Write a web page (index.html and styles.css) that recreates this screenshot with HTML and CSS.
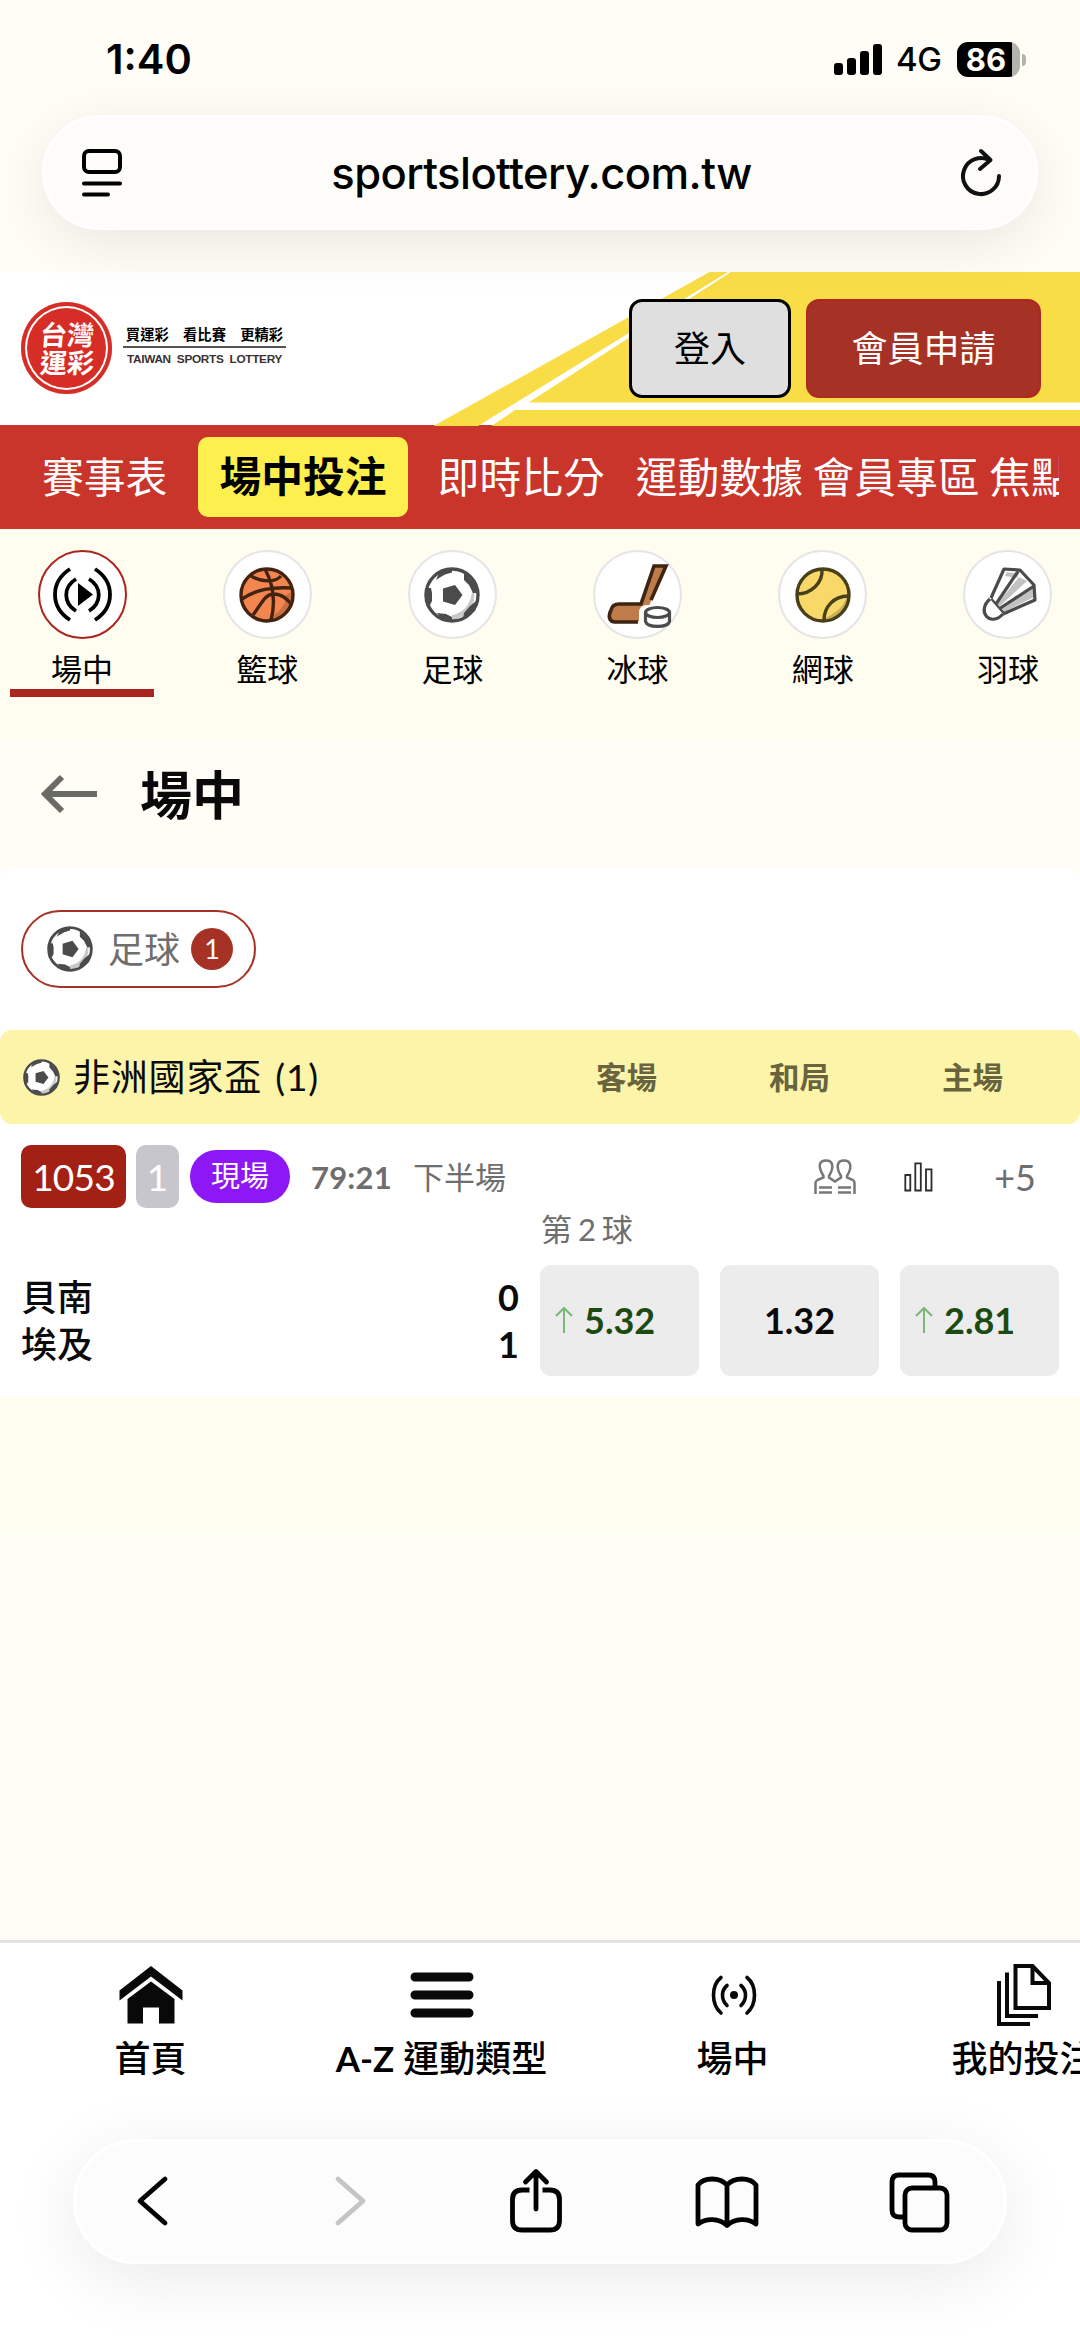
FILE: index.html
```html
<!DOCTYPE html>
<html lang="zh-Hant">
<head>
<meta charset="utf-8">
<title>台灣運彩</title>
<link rel="stylesheet" href="styles.css">
</head>
<body>
<svg width="0" height="0" class="defs">
  <symbol id="soccer" viewBox="0 0 56 56">
    <circle cx="28" cy="28" r="26" fill="#fff"/>
    <path d="M50 23a25 25 0 0 1-22 30v-5q17-3 20-23z" fill="#c9c9c9"/>
    <circle cx="28" cy="28" r="26" fill="none" stroke="#4b4b4b" stroke-width="3.4"/>
    <path d="M19 21.500L31 18l7.500 10L31 38l-12-3.500z" fill="#4b4b4b"/>
    <path d="M12 13l3-7 13-4.500v4l-7 2-6 3.500zM1.500 21H7l1 5v8l-2 4H2zM13 46l9 1 6 3v4l-10-1zM40 5l11 12 2 9h-4l-4-8-5-5zM51 35l3-3-3 12-12 9 1-7 6-7z" fill="#4b4b4b"/>
  </symbol>
</svg>
<div class="screen">
  <div class="status">
    <span class="time">1:40</span>
    <div class="status-right">
      <svg width="48" height="31" viewBox="0 0 48 31"><rect y="19" width="9" height="12" rx="3"/><rect x="13" y="14" width="9" height="17" rx="3"/><rect x="26" y="7" width="9" height="24" rx="3"/><rect x="39" width="9" height="31" rx="3"/></svg>
      <span class="net">4G</span>
      <span class="battery">86</span>
    </div>
  </div>
  <div class="address">
    <svg width="40" height="48" viewBox="0 0 40 48" fill="none" stroke="#000" stroke-width="4" stroke-linecap="round"><rect x="2" y="2" width="36" height="21" rx="5"/><path d="M2 34.500h36M2 45.500h24"/></svg>
    <span class="url">sportslottery.com.tw</span>
    <svg width="40" height="48" viewBox="0 0 40 48" fill="none" stroke="#111" stroke-width="4" stroke-linecap="round" stroke-linejoin="round"><path d="M38 27a18 18 0 1 1-9-15.500M20 2l9.500 9L19 20"/></svg>
  </div>

  <header class="header">
    <svg class="header-art" width="648" height="154" viewBox="432 271 648 154"><g fill="#f9dd47"><path d="M433.500 425L709.600 271H728L478 425z"/><path d="M731 271h349v130.500H528.600z"/><path d="M515 409h565v16H491.500z"/></g></svg>
    <div class="brand">
      <div class="seal"><span>台灣</span><span>運彩</span></div>
      <div class="tagline"><span class="zh">買運彩　看比賽　更精彩</span><span class="en">TAIWAN SPORTS LOTTERY</span></div>
    </div>
    <div class="auth"><button class="btn login">登入</button><button class="btn join">會員申請</button></div>
  </header>

  <nav class="nav"><div class="nav-scroll">
    <a class="first">賽事表</a><a class="on">場中投注</a><a class="after">即時比分</a><a>運動數據</a><a class="tight">會員專區</a><a class="tight">焦點新聞</a>
  </div></nav>

  <div class="sports">
    <div class="sport on"><div class="ring"><svg width="85" height="85" viewBox="0 0 85 85"><path d="M38 31v23l15-11.500z"/><path d="M30 17c-20 13-20 38 0 51M36 27c-13 8-13 24 0 32M55 17c20 13 20 38 0 51M49 27c13 8 13 24 0 32" fill="none" stroke="#000" stroke-width="3.800"/></svg></div><span>場中</span></div>
    <div class="sport"><div class="ring"><svg width="56" height="56" viewBox="0 0 56 56"><circle cx="28" cy="28" r="26" fill="#f3854f"/><path d="M47 28c0 12-8 18-20 25 17 3 31-12 27-29z" fill="#c96f42"/><g fill="none" stroke="#43230f" stroke-width="3.400"><circle cx="28" cy="28" r="26"/><path d="M26 2c8 15 11 32 6 51M12 9c10 6 24 7 30 0M3 32c15-10 30-12 50-11M14 48c9-12 12-21 21-21 8 0 13 5 18 11"/></g></svg></div><span>籃球</span></div>
    <div class="sport"><div class="ring"><svg width="56" height="56"><use href="#soccer"/></svg></div><span>足球</span></div>
    <div class="sport"><div class="ring"><svg width="85" height="85" viewBox="0 0 85 85"><path d="M59 14h12L54 54v15H20c-6 0-7-6-4-11 1-4 4-6 8-6h22z" fill="#be7c4b"/><path d="M43 70H20c-6 0-7-6-4-12 1-4 4-6 8-6h22L59 14h12L56 48" fill="none" stroke="#3d2413" stroke-width="3.600"/><path d="M44 76V61q0-8 8-8h14q7 0 7 8v13z" fill="#fff"/><g fill="#fff" stroke="#4b4b4b" stroke-width="3.200"><path d="M50.500 60.500v9c2 6.500 22 6.500 24 0v-9"/><ellipse cx="62.500" cy="60.500" rx="12" ry="5"/></g></svg></div><span>冰球</span></div>
    <div class="sport"><div class="ring"><svg width="56" height="56" viewBox="0 0 56 56"><circle cx="28" cy="28" r="26" fill="#f8d869"/><path d="M52 29C48 42 40 45 28 53c15 3 27-9 24-24z" fill="#cdb156"/><g fill="none" stroke="#484019" stroke-width="3.400"><circle cx="28" cy="28" r="26"/><path d="M27 2c1 14-11 25-25 25M53 29c-14 0-24 11-24 24"/></g></svg></div><span>網球</span></div>
    <div class="sport"><div class="ring"><svg width="56" height="58" viewBox="0 0 56 58"><path d="M24 5l17 3 11 12 2 16-31 14L11 34z" fill="#fff"/><path d="M27 6l12 2-2 4-12-2zM53 22L19 45l3 2 32-16zM39 11L17 38l3 2 27-25z" fill="#c2c2c2"/><g fill="none" stroke="#4b4b4b" stroke-width="3.200" stroke-linejoin="round"><path d="M11 32L24 3l16 1 14 15 1 15-32 14M39 4L16 38M54 20L19 43M11 33l12 14"/><path d="M10 33c-14 12 0 29 13 15" fill="#fff"/></g></svg></div><span>羽球</span></div>
  </div>

  <div class="title-bar">
    <svg width="56" height="38" viewBox="0 0 56 38" fill="none" stroke="#6b6b66" stroke-width="6"><path d="M20 2L3 19l17 17M4 19h51"/></svg>
    <h1>場中</h1>
  </div>

  <main class="panel">
    <div class="chip"><svg width="46" height="46"><use href="#soccer"/></svg><span>足球</span><b>1</b></div>
    <div class="league">
      <svg width="37" height="37"><use href="#soccer"/></svg><span class="name">非洲國家盃 (1)</span>
      <div class="cols"><span>客場</span><span>和局</span><span>主場</span></div>
    </div>
    <div class="meta">
      <span class="code">1053</span><span class="min">1</span><span class="live">現場</span><span class="clock">79:21</span><span class="half">下半場</span>
      <div class="tools">
        <svg width="42" height="36" viewBox="0 0 42 36" fill="none" stroke="#777" stroke-width="2.500"><path d="M1.500 35V24q0-2 2-3l6-2.500V17C3.500 7 5 1.500 12 1.500S20.500 8 15 17v1.500l6 4 6-4V17C21.500 8 23 1.500 30 1.500S38.500 8 33 17v1.500l6 2.500q1.500 1 1.500 3v11M5 28.500h13M5 33.500h13M24 28.500h13M24 33.500h13"/></svg>
        <svg width="29" height="30" viewBox="0 0 29 30" fill="none" stroke="#2b2b2b" stroke-width="1.800"><path d="M1.300 13h5v15.500h-5zM11.300 1.300h5.500v27.200h-5.500zM22 7.300h5.500v21.200H22z"/></svg>
        <span>+5</span>
      </div>
    </div>
    <div class="market">第 2 球</div>
    <div class="match">
      <div class="teams"><div><span>貝南</span><b>0</b></div><div><span>埃及</span><b>1</b></div></div>
      <div class="odds">
        <div class="odd up"><svg width="18" height="27" viewBox="0 0 18 27" fill="none" stroke="#7ab877" stroke-width="2"><path d="M9 27V2M1 10l8-8 8 8"/></svg>5.32</div>
        <div class="odd">1.32</div>
        <div class="odd up"><svg width="18" height="27" viewBox="0 0 18 27" fill="none" stroke="#7ab877" stroke-width="2"><path d="M9 27V2M1 10l8-8 8 8"/></svg>2.81</div>
      </div>
    </div>
  </main>

  <div class="rest"></div>

  <footer class="bottom">
    <div class="tabs">
      <div class="tab"><svg width="64" height="62" viewBox="0 0 64 62" fill="#090909"><path d="M.5 26.500L32 2l31.500 24.500v10L32 12.500.5 36.500z"/><path d="M8.500 35L32 17.500 55.500 35v24.500H40v-16H24v16H8.500z"/></svg><span>首頁</span></div>
      <div class="tab"><svg width="64" height="62" viewBox="0 0 64 62" stroke="#090909" stroke-width="9" stroke-linecap="round"><path d="M5 13h54M5 31h54M5 49h54"/></svg><span><b>A-Z</b> 運動類型</span></div>
      <div class="tab"><svg width="64" height="62" viewBox="0 0 64 62" fill="none" stroke="#090909" stroke-width="3.600" stroke-linecap="round"><circle cx="33" cy="31" r="4" fill="#090909" stroke="none"/><path d="M20 13.500c-10 8-10 27 0 35.500M26 21.500c-6 5-6 14 0 20M46 13.500c10 8 10 27 0 35.500M40 21.500c6 5 6 14 0 20"/></svg><span>場中</span></div>
      <div class="tab"><svg width="64" height="62" viewBox="0 0 64 62" fill="none" stroke="#090909" stroke-width="4"><path d="M23.500 2h17L57 19v25H23.500zM40.500 3v16H57M15 8.500V52h31M7 17v43h31"/></svg><span>我的投注</span></div>
    </div>
    <div class="toolbar">
      <svg width="62" height="64" viewBox="0 0 62 64"><path d="M43 10L18 32l25 22" transform="translate(0 0)"/></svg>
      <svg class="dim" width="62" height="64" viewBox="0 0 62 64"><path d="M25 10l25 22-25 22"/></svg>
      <svg width="62" height="64" viewBox="0 0 62 64"><path class="butt" d="M26.500 21H19q-9.500 0-9.500 9.500v21q0 9.500 9.500 9.500h28q9.500 0 9.500-9.500v-21Q56.500 21 47 21h-7.500"/><path d="M33 40V3M22.500 13L33 2.500 43.500 13"/></svg>
      <svg width="66" height="64" viewBox="0 0 66 64"><path d="M33 56.500V16C26 8 10 8 4 16v39c8-6 21-6 29 1.500 8-7.500 21-7.500 29-1.500V16C56 8 40 8 33 16"/></svg>
      <svg width="62" height="64" viewBox="0 0 62 64"><path d="M16 48h-5q-7 0-7-7V13q0-7 7-7h29q7 0 7 7v5"/><rect x="17" y="19" width="42" height="42" rx="7"/></svg>
    </div>
  </footer>
</div>
</body>
</html>
```
FILE: styles.css
```css
* { box-sizing: border-box; }
body { margin: 0; font-family: Lato, "Noto Sans CJK TC", sans-serif; color: #000; background: #fffdf5; }
svg { display: block; flex: none; overflow: visible; }
.defs { position: absolute; }
.screen { width: 1080px; height: 2337px; overflow: hidden; display: flex; flex-direction: column; background: #fffdf5; }

.status { height: 115px; padding: 3px 54px 0 106px; display: flex; justify-content: space-between; align-items: center; font-family: Inter, sans-serif; }
.time { font-size: 41.500px; font-weight: 600; }
.status-right { display: flex; align-items: center; }
.net { margin-left: 14px; width: 46px; font-size: 33px; font-weight: 500; letter-spacing: -.5px; }
.battery { position: relative; margin: 0 6px 0 15px; width: 63px; height: 35px; border-radius: 11px; padding-right: 8px; background: linear-gradient(90deg, #000 55px, #b4b4ae 55px); color: #fffdf5; font-size: 31px; font-weight: 700; line-height: 35px; text-align: center; padding-left: 3px; }
.battery::after { content: ""; position: absolute; left: 65px; top: 12px; width: 4px; height: 12px; border-radius: 0 4px 4px 0; background: #b4b4ae; }

.address { position: relative; z-index: 2; margin: 0 42px 42px; height: 115px; flex: none; padding: 0 34px 0 37px; display: flex; align-items: center; justify-content: space-between; border: 3px solid #fff; border-radius: 58px; background: #fdfcf8; box-shadow: 0 14px 60px rgba(0,0,0,.09); }
.url { font-family: Inter, sans-serif; font-size: 43.500px; font-weight: 500; letter-spacing: -.55px; }

.header { position: relative; height: 153px; flex: none; background: #fff; display: flex; justify-content: space-between; align-items: flex-start; }
.header-art { position: absolute; right: 0; top: 0; }
.brand { position: relative; display: flex; gap: 11px; padding: 30px 0 0 21px; }
.seal { width: 91px; height: 92px; border-radius: 50%; background: #d62d26; box-shadow: inset 0 0 0 4px #d62d26, inset 0 0 0 6px #fff; display: flex; flex-direction: column; align-items: center; justify-content: center; padding-top: 2px; color: #fff; font-size: 27px; line-height: 28px; font-weight: 700; }
.seal span { transform: skewX(-5deg); }
.tagline { display: flex; flex-direction: column; align-items: center; width: 163px; padding-top: 22px; }
.zh { font-size: 14.300px; line-height: 22px; font-weight: 700; white-space: nowrap; width: 163px; text-align: center; border-bottom: 2px solid #555; }
.en { margin-top: 4px; font: 700 11.800px/14px "Liberation Sans", sans-serif; white-space: nowrap; word-spacing: 3px; letter-spacing: -.3px; color: #3a3030; }
.auth { position: relative; display: flex; gap: 15px; padding: 27px 39px 0 0; }
.btn { height: 99px; border-radius: 13px; font: 36px/1 Lato, "Noto Sans CJK TC", sans-serif; padding: 0 0 2px; }
.login { width: 162px; border: 3px solid #000; background: #dfdfdf; color: #000; }
.join { width: 235px; border: 2px solid #b02820; background: #a63225; color: #fff; }

.nav { height: 104px; flex: none; padding: 0 21px; background: #c9342b; }
.nav-scroll { height: 104px; overflow: hidden; display: flex; align-items: center; color: #fff; font-size: 41.800px; line-height: 60px; white-space: nowrap; }
.nav a { margin-left: 31px; flex: none; }
.nav .first { margin-left: 21px; }
.nav .on { padding: 9px 21px 11px; border-radius: 10px; background: #fdf04e; color: #000; font-weight: 700; height: 80px; }
.nav .after { margin-left: 30px; }
.nav .tight { margin-left: 9.500px; }

.sports { height: 209px; flex: none; background: #fffcf0; overflow: hidden; display: flex; padding: 21px 0 0 10px; gap: 41.200px; }
.sport { width: 144px; height: 147px; flex: none; display: flex; flex-direction: column; align-items: center; border-bottom: 8px solid transparent; font-size: 31px; line-height: 40px; }
.sport.on { border-color: #ab2520; }
.sport span { margin-top: 10px; }
.ring { width: 89px; height: 89px; flex: none; border-radius: 50%; border: 2px solid #e5e5e5; background: #fff; display: flex; align-items: center; justify-content: center; }
.sport.on .ring { border-color: #ab2520; }

.title-bar { height: 130px; flex: none; padding: 0 0 18px 42px; display: flex; align-items: center; gap: 42px; background: #fffdf6; }
h1 { margin: 0; padding-top: 1px; font-size: 52px; line-height: 70px; font-weight: 700; color: #090909; }

.panel { height: 529px; flex: none; background: #fff; border-radius: 12px 12px 0 0; padding-top: 42px; display: flex; flex-direction: column; }
.chip { margin-left: 21px; width: 235px; height: 78px; flex: none; border: 2.500px solid #a63225; border-radius: 39px; display: flex; align-items: center; padding-left: 24px; color: #6e6e6e; font-size: 36px; line-height: 50px; }
.chip span { margin-left: 15px; width: 72px; }
.chip b { margin-left: 11px; width: 42px; height: 42px; border-radius: 50%; background: #a63225; color: #fff; font-size: 27px; line-height: 42px; font-weight: 400; text-align: center; }
.league { margin-top: 42px; height: 94px; flex: none; border-radius: 12px; background: #fcf4a8; display: flex; align-items: center; padding: 0 21px 0 23px; color: #0b0b0b; }
.name { margin-left: 13px; font-size: 37px; line-height: 50px; letter-spacing: .8px; word-spacing: 3px; white-space: nowrap; }
.cols { margin-left: auto; width: 519px; display: flex; }
.cols span { width: 173px; text-align: center; font-size: 30.500px; line-height: 44px; font-weight: 700; color: #67643f; }
.meta { margin-top: 21px; height: 63px; flex: none; padding: 0 21px; display: flex; align-items: center; color: #6e6e6e; }
.code, .min { height: 63px; line-height: 64px; border-radius: 10px; color: #fff; font-size: 37px; text-align: center; }
.code { width: 105px; background: #a32015; letter-spacing: -.8px; }
.min { margin-left: 10px; width: 43px; background: #c7c6cc; }
.live { margin-left: 11px; width: 100px; height: 53px; border-radius: 27px; background: #8e18f5; color: #fff; font-size: 29px; line-height: 52px; text-align: center; }
.clock { margin-left: 21px; font-size: 31px; font-weight: 700; width: 82px; letter-spacing: .2px; }
.half { margin-left: 20px; font-size: 31px; line-height: 44px; }
.tools { margin-left: auto; display: flex; align-items: center; font-size: 36px; padding-right: 23px; }
.tools svg + svg { margin-left: 48px; }
.tools span { margin-left: 61px; }
.market { padding-left: 541px; font-size: 31px; line-height: 43px; word-spacing: -2px; color: #6e6e6e; }
.match { margin-top: 14px; padding: 0 21px; display: flex; justify-content: space-between; align-items: center; }
.teams { width: 498px; font-size: 36px; line-height: 47px; font-weight: 500; color: #0b0b0b; }
.teams div { display: flex; justify-content: space-between; }
.teams b { line-height: 46px; }
.odds { display: flex; gap: 21px; }
.odd { width: 159px; height: 111px; border-radius: 11px; background: #ececec; display: flex; align-items: center; justify-content: center; padding-bottom: 2px; font-size: 36px; font-weight: 700; color: #0a0a0a; }
.odd.up { color: #1c4b12; justify-content: flex-start; padding-left: 15px; }
.odd svg { margin-right: 11px; }

.rest { height: 138px; flex: none; background: #fffcf0; }
.bottom { margin-top: auto; height: 397px; flex: none; border-top: 3px solid #e3e3e3; background: #fff; overflow: hidden; }
.tabs { display: flex; padding: 21px 0 0 5px; height: 196px; }
.tab { width: 291px; flex: none; display: flex; flex-direction: column; align-items: center; font-size: 36px; line-height: 50px; font-weight: 500; }
.tab span { margin-top: 7px; white-space: nowrap; }
.tab b { font-size: 35px; }
.toolbar { margin: 0 73px; height: 125px; padding: 0 54px 0 46px; border: 3px solid #fff; border-radius: 63px; background: #fcfcfc; box-shadow: 0 14px 70px rgba(0,0,0,.085); display: flex; align-items: center; justify-content: space-between; }
.toolbar svg { position: relative; top: -1px; fill: none; stroke: #000; stroke-width: 4.800; stroke-linecap: round; stroke-linejoin: round; }
.toolbar .butt { stroke-linecap: butt; }
.toolbar .dim { stroke: #c4c4c6; }
```
